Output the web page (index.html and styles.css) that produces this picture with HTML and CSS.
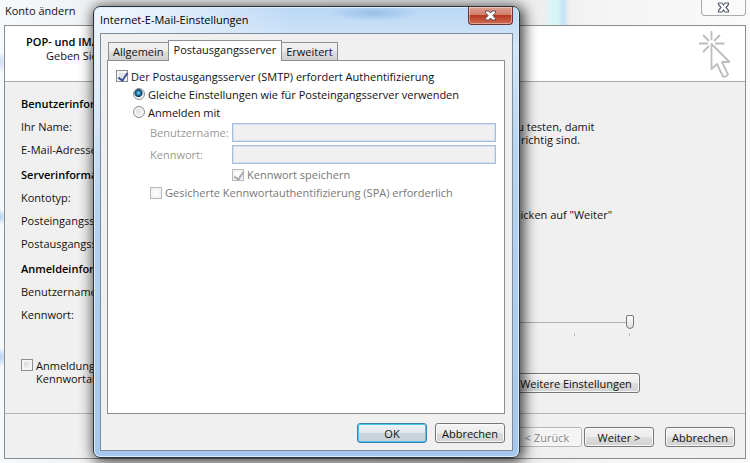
FILE: index.html
```
<!DOCTYPE html>
<html lang="de">

<head>
    <meta charset="UTF-8">
    <title>Konto ändern</title>
    <link rel="stylesheet" href="styles.css">
</head>

<body>

    <div class="window">
        <div class="window-title">
            <h1>Konto ändern</h1>
            <button type="button" class="window-close" aria-label="Schließen">
                <svg width="13" height="11" viewBox="0 0 13 11">
                    <path d="M1.5 1H5L6.5 3L8 1H11.5V2.5L9 5.5L11.5 8.5V10H8L6.5 8L5 10H1.5V8.5L4 5.5L1.5 2.5Z" fill="#fff" stroke="#5b6074" stroke-width="1.2" />
                </svg>
            </button>
        </div>

        <div class="wizard">
            <div class="wizard-header">
                <div>
                    <h2>POP- und IMAP</h2>
                    <p>Geben Sie</p>
                </div>
                <svg class="cursor-icon" width="34" height="50" viewBox="0 0 34 50" fill="none" stroke="#bdbdbd" stroke-width="1.8">
                    <path d="M13.5 1V10M1 13.5H10M17 13.5H26.5M5 5L11 11M22 5L16 11M5 22L11 16" />
                    <path d="M13.5 14V39L19 34L25 46.5Q27.5 47.5 30 44.5L24 32H31.5Z" stroke-linejoin="round" />
                </svg>
            </div>

            <div class="wizard-main">
                <div class="account">
                    <h3>Benutzerinform</h3>
                    <p>Ihr Name:</p>
                    <p>E-Mail-Adresse:</p>
                    <h3>Serverinformat</h3>
                    <p>Kontotyp:</p>
                    <p>Posteingangss</p>
                    <p>Postausgangss</p>
                    <h3>Anmeldeinform</h3>
                    <p>Benutzername:</p>
                    <p>Kennwort:</p>
                    <label class="check spa">
                        <input type="checkbox">
                        <span>Anmeldung<br>Kennwortau</span>
                    </label>
                </div>
                <div class="test">
                    <p class="test-text">zu testen, damit<br>e richtig sind.</p>
                    <p class="test-hint">klicken auf "Weiter"</p>
                    <div class="slider">
                        <input type="range" min="0" max="10" value="10" aria-label="E-Mail im Offlinemodus">
                        <div class="ticks"><i></i><i></i><i></i></div>
                    </div>
                    <button type="button" class="btn more">Weitere Einstellungen</button>
                </div>
            </div>

            <div class="wizard-footer">
                <button type="button" class="btn" disabled>&lt; Zurück</button>
                <button type="button" class="btn">Weiter &gt;</button>
                <button type="button" class="btn cancel">Abbrechen</button>
            </div>
        </div>
    </div>

    <div class="dialog" role="dialog" aria-labelledby="dialogTitle">
        <div class="dialog-title">
            <h2 id="dialogTitle">Internet-E-Mail-Einstellungen</h2>
            <button type="button" class="dialog-close" aria-label="Schließen">
                <svg width="13" height="11" viewBox="0 0 13 11">
                    <path d="M1.5 1H5L6.5 3L8 1H11.5V2.5L9 5.5L11.5 8.5V10H8L6.5 8L5 10H1.5V8.5L4 5.5L1.5 2.5Z" fill="#fff" stroke="#5f4a50" />
                </svg>
            </button>
        </div>

        <form class="dialog-body">
            <div class="tabs" role="tablist">
                <button type="button" class="tab" role="tab">Allgemein</button>
                <button type="button" class="tab active" role="tab" aria-selected="true">Postausgangsserver</button>
                <button type="button" class="tab" role="tab">Erweitert</button>
            </div>

            <div class="panel" role="tabpanel">
                <label class="check">
                    <input type="checkbox" checked>
                    <span>Der Postausgangsserver (SMTP) erfordert Authentifizierung</span>
                </label>
                <label class="check indent">
                    <input type="radio" name="login" checked>
                    <span>Gleiche Einstellungen wie für Posteingangsserver verwenden</span>
                </label>
                <label class="check indent">
                    <input type="radio" name="login">
                    <span>Anmelden mit</span>
                </label>
                <div class="fields">
                    <label for="user">Benutzername:</label>
                    <input type="text" id="user" disabled>
                    <label for="password">Kennwort:</label>
                    <input type="password" id="password" disabled>
                    <label class="check save">
                        <input type="checkbox" checked disabled>
                        <span>Kennwort speichern</span>
                    </label>
                    <label class="check secure">
                        <input type="checkbox" disabled>
                        <span>Gesicherte Kennwortauthentifizierung (SPA) erforderlich</span>
                    </label>
                </div>
            </div>

            <div class="dialog-buttons">
                <button type="submit" class="btn default">OK</button>
                <button type="button" class="btn">Abbrechen</button>
            </div>
        </form>
    </div>

</body>

</html>
```
FILE: styles.css
```
* {
    box-sizing: border-box;
}

body {
    font-family: "Open Sans", "Noto Sans", sans-serif;
    font-size: 11px;
    line-height: 13px;
    color: #111;
    margin: 0;
    overflow: hidden;
}

h1,
h2,
h3,
p {
    margin: 0;
    font-size: 11px;
    font-weight: 600;
    white-space: nowrap;
}

p {
    font-weight: normal;
}

h2,
h3 {
    color: #000;
}

button,
input {
    font: inherit;
    color: inherit;
    margin: 0;
    padding: 0;
}

svg {
    display: block;
}

/* main window */

.window {
    display: flex;
    flex-direction: column;
    height: 100vh;
    padding: 0 4px 4px;
    background:
        radial-gradient(circle at 0 62px, #c9dcf3, transparent 10px),
        radial-gradient(circle at 0 217px, #b3d0f0, transparent 8px),
        radial-gradient(circle at 0 357px, #b3d0f0, transparent 10px),
        linear-gradient(90deg, transparent 543px, #d8f5f5 552px, #d8f5f5 558px, #c4e1f5 563px, transparent 570px) top / 100% 25px no-repeat,
        linear-gradient(90deg, #f6fafd 0, #eff1f3 90px, #ececec 520px, #f4f4f4 600px, #fafafa 100%);
}

.window-title {
    display: flex;
    justify-content: space-between;
    align-items: flex-start;
    height: 25px;
}

.window-title h1 {
    font-weight: normal;
    line-height: 22px;
    padding-left: 1px;
}

.window-close {
    display: flex;
    justify-content: center;
    align-items: center;
    width: 45px;
    height: 16px;
    background: #fafafa;
    border: 1px solid #aaa;
    border-top: none;
    border-radius: 0 0 4px 4px;
}

.wizard {
    flex: 1;
    display: flex;
    flex-direction: column;
    background: #f0f0f0;
    border: 1px solid #8c8c8c;
}

.wizard-header {
    display: flex;
    justify-content: space-between;
    height: 56px;
    padding: 4px 13px 0 21px;
    background: #fff;
    border-bottom: 1px solid #a8a8a8;
}

.wizard-header h2 {
    line-height: 14px;
    padding-top: 5px;
}

.wizard-header p {
    padding-left: 20px;
}

.wizard-main {
    flex: 1;
    display: grid;
    grid-template-columns: 1fr 233px;
    padding: 10px 0 0 16px;
    border-bottom: 1px solid #b5b5b5;
}

.account h3,
.account p {
    line-height: 23px;
}

.account p + h3 {
    margin-top: 2px;
}

.test-text {
    padding-top: 28px;
}

.test-hint {
    padding-top: 62px;
}

.slider {
    width: 122px;
    margin-top: 93px;
}

.slider input {
    appearance: none;
    display: block;
    width: 100%;
    height: 16px;
    background: linear-gradient(#b0b0b0, #b0b0b0) center / 100% 1px no-repeat;
}

.slider input::-webkit-slider-thumb {
    appearance: none;
    width: 8px;
    height: 14px;
    background: linear-gradient(#fff, #ddd);
    border: 1px solid #777;
    border-radius: 2px 2px 4px 4px;
}

.ticks {
    display: flex;
    justify-content: space-between;
    padding: 3px 4px 0 7px;
}

.ticks i {
    width: 1px;
    height: 3px;
    background: #bbb;
}

.wizard-footer {
    display: flex;
    justify-content: flex-end;
    gap: 2px;
    height: 44px;
    padding: 13px 10px 0 0;
}

.cancel {
    margin-left: 9px;
}

/* controls */

.btn {
    width: 70px;
    height: 20px;
    background: linear-gradient(#f4f4f4, #ececec 48%, #dedede 52%, #d2d2d2);
    border: 1px solid #777;
    border-radius: 3px;
    box-shadow: inset 0 0 0 1px #f8f8f8;
    white-space: nowrap;
}

.btn.default {
    background: linear-gradient(#f0f4f6, #e2e9ed 48%, #ccd5db 52%, #c8d2d8);
    border-color: #3c7fb1;
    box-shadow: inset 0 0 0 1px #46c8f0;
}

.btn:disabled {
    background: #f4f4f4;
    border-color: #b5b5b5;
    color: #888;
}

.more {
    width: 128px;
    margin-top: 37px;
}

.check {
    display: flex;
    align-items: center;
    gap: 3px;
    white-space: nowrap;
}

.check input {
    appearance: none;
    flex: none;
    width: 12px;
    height: 12px;
    border: 1px solid #8e8f8f;
    background: linear-gradient(135deg, #cfd3d8, #fafafa);
    box-shadow: inset 0 0 0 2px #f4f4f4;
}

.check input[type="checkbox"]:checked {
    position: relative;
}

.check input[type="checkbox"]:checked::after {
    content: "";
    position: absolute;
    left: 3px;
    top: 0;
    width: 4px;
    height: 8px;
    border: solid #3d4f9b;
    border-width: 0 2px 2px 0;
    transform: rotate(35deg);
}

.check input:disabled {
    background: #fbfbfb;
    border-color: #b8b8b8;
}

.check input[type="checkbox"]:disabled::after {
    border-color: #aaa;
}

.check input[type="radio"] {
    border-radius: 50%;
}

.check input[type="radio"]:checked {
    background: radial-gradient(circle at 45% 40%, #9fe0f8, #1d7fae 25%, #123c5c 45%, #f4f4f4 55%);
    box-shadow: none;
}

.spa {
    align-items: flex-start;
    margin-top: 33px;
}

/* settings dialog */

.dialog {
    position: absolute;
    left: 93px;
    top: 6px;
    width: 427px;
    padding: 0 6px 6px;
    border: 1px solid #30343a;
    border-radius: 7px;
    background:
        radial-gradient(ellipse 45px 8px at 280px 6px, #98bfe8, transparent),
        radial-gradient(ellipse at 20px 8px, #f0f6fc, transparent 180px),
        linear-gradient(#b9d7f5, #d5e7f8 40px, #b8d5f2 140px, #a5c8ec);
    box-shadow: inset 0 0 0 1px #dcecfa, 2px 2px 14px 2px rgba(0, 0, 0, 0.75);
}

.dialog-title {
    display: flex;
    justify-content: space-between;
    align-items: flex-start;
    height: 26px;
}

.dialog-title h2 {
    font-weight: normal;
    line-height: 26px;
}

.dialog-close {
    display: flex;
    justify-content: center;
    align-items: center;
    width: 45px;
    height: 18px;
    background: linear-gradient(#e0a294, #d37f6c 45%, #b93a22 50%, #cf6a50);
    border: 1px solid #6a3437;
    border-top: none;
    border-radius: 0 0 4px 4px;
    box-shadow: inset 0 0 0 1px rgba(255, 255, 255, 0.4);
}

.dialog-body {
    padding: 6px 7px 7px 6px;
    background: #f0f0f0;
    border: 1px solid #7d8b9a;
}

.tabs {
    display: flex;
    align-items: flex-end;
    height: 20px;
    padding-left: 1px;
}

.tab {
    height: 18px;
    padding: 0 4px;
    background: linear-gradient(#f2f2f2, #ebebeb 48%, #dcdcdc 52%, #d2d2d2);
    border: 1px solid #8c8e94;
    border-bottom: none;
}

.tab.active {
    position: relative;
    height: 21px;
    margin: 0 -1px -1px;
    padding: 0 5px 3px;
    background: #fff;
}

.panel {
    height: 354px;
    padding: 6px 8px;
    background: #fff;
    border: 1px solid #8c8e94;
}

.panel > .check {
    height: 18px;
}

.indent {
    padding-left: 17px;
}

.fields {
    display: grid;
    grid-template-columns: 82px 1fr;
    row-gap: 3px;
    align-items: center;
    padding: 2px 0 0 34px;
    color: #999;
}

.fields > input {
    height: 19px;
    background: #f0f0f0;
    border: 1px solid #a9bdd8;
    box-shadow: inset 0 0 0 1px #d3e2f2;
}

.fields > .check {
    height: 15px;
}

.save {
    grid-column: 2;
    color: #777;
}

.secure {
    grid-column: 1 / 3;
    color: #777;
}

.dialog-buttons {
    display: flex;
    justify-content: flex-end;
    gap: 8px;
    padding-top: 9px;
}
```
